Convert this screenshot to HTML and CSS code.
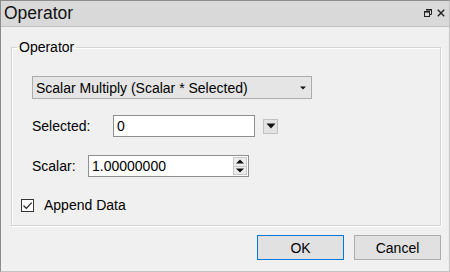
FILE: index.html
```html
<!DOCTYPE html>
<html>
<head>
<meta charset="utf-8">
<link rel="stylesheet" href="styles.css">
</head>
<body>
<div class="window">
  <div class="titlebar">
    <span class="title">Operator</span>
    <div class="title-icons">
      <svg class="ico-restore" width="8" height="8" viewBox="0 0 8 8">
        <path d="M2.5 0.5h5v5h-1.5" fill="none" stroke="#222" stroke-width="1"/>
        <rect x="2" y="0" width="6" height="1.6" fill="#222"/>
        <rect x="0.5" y="2.5" width="5" height="5" fill="none" stroke="#222" stroke-width="1"/>
        <rect x="0" y="2" width="6" height="1.6" fill="#222"/>
      </svg>
      <svg class="ico-close" width="8" height="8" viewBox="0 0 8 8">
        <path d="M0.8 0.8L7.2 7.2M7.2 0.8L0.8 7.2" stroke="#222" stroke-width="1.4"/>
      </svg>
    </div>
  </div>
  <div class="content">
    <fieldset class="group">
      <legend class="group-label">Operator</legend>
      <div class="combo">
        <span class="combo-text">Scalar Multiply (Scalar * Selected)</span>
        <svg class="combo-arrow" width="6" height="4" viewBox="0 0 6 4"><path d="M0 0.5h6L3 3.5z" fill="#111"/></svg>
      </div>
      <div class="row row-selected">
        <span class="lbl">Selected:</span>
        <div class="textbox">0</div>
        <div class="drop-btn">
          <svg width="10" height="6" viewBox="0 0 10 6"><path d="M0.5 0.5h9L5 5.5z" fill="#111"/></svg>
        </div>
      </div>
      <div class="row row-scalar">
        <span class="lbl">Scalar:</span>
        <div class="textbox spinbox">
          <span class="spin-value">1.00000000</span>
          <div class="spin">
            <div class="spin-part"><svg width="8" height="5" viewBox="0 0 8 5"><path d="M0 4.5h8L4 0.5z" fill="#111"/></svg></div>
            <div class="spin-part"><svg width="8" height="5" viewBox="0 0 8 5"><path d="M0 0.5h8L4 4.5z" fill="#111"/></svg></div>
          </div>
        </div>
      </div>
      <div class="check-row">
        <span class="check">
          <svg width="11" height="11" viewBox="0 0 11 11"><path d="M1.5 5.5L4.3 8.3L9.7 2.6" fill="none" stroke="#222" stroke-width="1.2"/></svg>
        </span>
        <span class="check-text">Append Data</span>
      </div>
    </fieldset>
    <div class="buttons">
      <button class="btn btn-primary">OK</button>
      <button class="btn">Cancel</button>
    </div>
  </div>
</div>
</body>
</html>
```

FILE: styles.css
```css
* { box-sizing: border-box; }
html, body { margin: 0; padding: 0; }
body {
  font-family: "Liberation Sans", Arial, sans-serif;
  font-size: 14px;
  color: #000;
  background: #f0f0f0;
}
.window {
  width: 450px;
  height: 272px;
  border: 1px solid #8c8c8c;
  border-right-color: #c4c4c4;
  border-bottom-color: #c4c4c4;
  background: #f0f0f0;
  display: flex;
  flex-direction: column;
}
.titlebar {
  height: 26px;
  background: #d9d9d9;
  border-bottom: 1px solid #c2c2c2;
  display: flex;
  align-items: center;
  justify-content: space-between;
  padding: 0 3px 1px 3px;
}
.title {
  font-size: 17.5px;
  color: #111;
}
.title-icons {
  display: flex;
  align-items: center;
  gap: 5px;
  padding-right: 1px;
}
.title-icons svg { display: block; }
.content {
  flex: 1;
  padding: 12px 8px 0 10px;
  display: flex;
  flex-direction: column;
}
.group {
  margin: 0;
  padding: 21px 9px 12px 9px;
  border: 1px solid #d4d4d4;
  box-shadow: 1px 1px 0 #ffffff, inset 1px 1px 0 #ffffff;
  min-width: 0;
}
.group-label {
  padding: 0 2px;
  margin-left: -4px;
  font-size: 14px;
  line-height: 16px;
}
.combo {
  margin-left: 11px;
  width: 280px;
  height: 23px;
  background: #e5e5e5;
  border: 1px solid #adadad;
  display: flex;
  align-items: center;
  justify-content: space-between;
  padding: 0 5px 0 3px;
}
.combo-arrow { display: block; }
.row {
  display: flex;
  align-items: center;
  margin-left: 11px;
}
.row-selected { margin-top: 16px; }
.row-scalar { margin-top: 18px; }
.row-selected .lbl { width: 81px; }
.row-scalar .lbl { width: 56px; }
.textbox {
  height: 22px;
  background: #fff;
  border: 1px solid #8f8f8f;
  display: flex;
  align-items: center;
  padding-left: 3px;
}
.row-selected .textbox { width: 142px; }
.drop-btn {
  margin-left: 8px;
  width: 15px;
  height: 15px;
  background: #e3e3e3;
  border: 1px solid #c2c2c2;
  display: flex;
  align-items: center;
  justify-content: center;
}
.drop-btn svg { display: block; }
.spinbox {
  width: 161px;
  height: 22px;
  justify-content: space-between;
  padding-right: 1px;
}
.spin {
  width: 14px;
  height: 18px;
  display: flex;
  flex-direction: column;
  border: 1px solid #c8c8c8;
  background: #ececec;
}
.spin-part {
  flex: 1;
  display: flex;
  align-items: center;
  justify-content: center;
}
.spin-part + .spin-part { border-top: 1px solid #c8c8c8; }
.spin-part svg { display: block; }
.check-row {
  margin-top: 20px;
  display: flex;
  align-items: center;
  gap: 10px;
}
.check {
  width: 13px;
  height: 13px;
  border: 1px solid #333;
  background: #fff;
  display: flex;
  align-items: center;
  justify-content: center;
}
.check svg { display: block; }
.buttons {
  margin-top: 9px;
  display: flex;
  justify-content: flex-end;
  gap: 10px;
}
.btn {
  width: 87px;
  height: 25px;
  font-family: "Liberation Sans", Arial, sans-serif;
  font-size: 14px;
  color: #000;
  background: #e1e1e1;
  border: 1px solid #adadad;
  padding: 0;
  margin: 0;
}
.btn-primary {
  border-color: #0078d7;
}
```
